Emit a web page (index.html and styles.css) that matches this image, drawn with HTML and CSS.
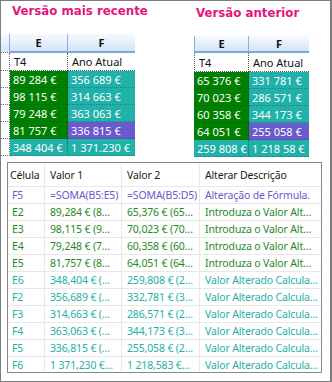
FILE: index.html
```html
<!DOCTYPE html>
<html lang="pt">
<head>
<meta charset="utf-8">
<link rel="stylesheet" href="styles.css">
</head>
<body>
<div class="frame">
  <div class="top">
    <section class="panel panel-new">
      <h2 class="title">Versão mais recente</h2>
      <div class="sheet sheet-new">
        <div class="hd stub"></div><div class="hd col-e">E</div><div class="hd">F</div>
        <div class="stub row-lbl"></div><div class="c lbl col-e">T4</div><div class="c lbl">Ano Atual</div>
        <div class="stub"></div><div class="c green col-e">89 284 €</div><div class="c teal">356 689 €</div>
        <div class="stub"></div><div class="c green col-e">98 115 €</div><div class="c teal">314 663 €</div>
        <div class="stub"></div><div class="c green col-e">79 248 €</div><div class="c teal">363 063 €</div>
        <div class="stub"></div><div class="c green col-e">81 757 €</div><div class="c purple">336 815 €</div>
        <div class="stub"></div><div class="c teal col-e">348 404 €</div><div class="c teal">1 371.230 €</div>
      </div>
    </section>
    <section class="panel panel-old">
      <h2 class="title">Versão anterior</h2>
      <div class="sheet sheet-old">
        <div class="hd col-e first">E</div><div class="hd">F</div>
        <div class="c lbl col-e first">T4</div><div class="c lbl">Ano Atual</div>
        <div class="c green col-e">65 376 €</div><div class="c teal">331 781 €</div>
        <div class="c green col-e">70 023 €</div><div class="c teal">286 571 €</div>
        <div class="c green col-e">60 358 €</div><div class="c teal">344 173 €</div>
        <div class="c green col-e">64 051 €</div><div class="c purple">255 058 €</div>
        <div class="c teal col-e">259 808 €</div><div class="c teal">1 218 58 €</div>
      </div>
    </section>
  </div>
  <div class="changes">
    <div class="grid">
      <div class="h">Célula</div><div class="h">Valor 1</div><div class="h">Valor 2</div><div class="h last">Alterar Descrição</div>

      <div class="r t-purple">F5</div><div class="r t-purple">=SOMA(B5:E5)</div><div class="r t-purple">=SOMA(B5:D5)</div><div class="r t-purple last">Alteração de Fórmula.</div>

      <div class="r t-green">E2</div><div class="r t-green">89,284 € (8…</div><div class="r t-green">65,376 € (65…</div><div class="r t-green last">Introduza o Valor Alt…</div>
      <div class="r t-green">E3</div><div class="r t-green">98,115 € (9…</div><div class="r t-green">70,023 € (70…</div><div class="r t-green last">Introduza o Valor Alt…</div>
      <div class="r t-green">E4</div><div class="r t-green">79,248 € (7…</div><div class="r t-green">60,358 € (60…</div><div class="r t-green last">Introduza o Valor Alt…</div>
      <div class="r t-green">E5</div><div class="r t-green">81,757 € (8…</div><div class="r t-green">64,051 € (64…</div><div class="r t-green last">Introduza o Valor Alt…</div>

      <div class="r t-teal">E6</div><div class="r t-teal">348,404 € (…</div><div class="r t-teal">259,808 € (2…</div><div class="r t-teal last">Valor Alterado Calcula…</div>
      <div class="r t-teal">F2</div><div class="r t-teal">356,689 € (…</div><div class="r t-teal">332,781 € (3…</div><div class="r t-teal last">Valor Alterado Calcula…</div>
      <div class="r t-teal">F3</div><div class="r t-teal">314,663 € (…</div><div class="r t-teal">286,571 € (2…</div><div class="r t-teal last">Valor Alterado Calcula…</div>
      <div class="r t-teal">F4</div><div class="r t-teal">363,063 € (…</div><div class="r t-teal">344,173 € (3…</div><div class="r t-teal last">Valor Alterado Calcula…</div>
      <div class="r t-teal">F5</div><div class="r t-teal">336,815 € (…</div><div class="r t-teal">255,058 € (2…</div><div class="r t-teal last">Valor Alterado Calcula…</div>
      <div class="r t-teal">F6</div><div class="r t-teal">1 371,230 €…</div><div class="r t-teal">1 218,583 €…</div><div class="r t-teal last">Valor Alterado Calcula…</div>
    </div>
  </div>
</div>
</body>
</html>
```
FILE: styles.css
```css
* { box-sizing: border-box; }
html, body { margin: 0; padding: 0; background: #fff; }
body { font-family: "Noto Sans", "Open Sans", sans-serif; }

.frame {
  width: 332px;
  height: 382px;
  border: 1px solid #7d7d7d;
  border-right-width: 2px;
  background: #fff;
  overflow: hidden;
}

.top {
  display: flex;
  height: 161px;
}

.panel { display: flex; flex-direction: column; }
.panel-new { width: 193px; }
.panel-old { width: 136px; }

.title {
  margin: 0;
  font-family: "DejaVu Sans", Verdana, sans-serif;
  font-weight: bold;
  font-size: 11.8px;
  line-height: 16px;
  color: #e4157f;
  white-space: nowrap;
}
.panel-new .title { height: 33px; padding: 2px 0 0 11px; }
.panel-old .title { height: 35px; padding: 4px 0 0 2px; }

.sheet {
  display: grid;
  font-size: 11px;
  color: #fff;
}
.sheet-new {
  grid-template-columns: 9px 58px 67px;
  grid-template-rows: 19px 18px repeat(5, 17px);
}
.sheet-old {
  grid-template-columns: 55px 60px;
  grid-template-rows: 17px 19px repeat(5, 17px);
}

.hd {
  background: linear-gradient(#f6faff, #d5e4f7);
  border-bottom: 2px solid #7ea6dc;
  color: #111;
  font-weight: bold;
  font-size: 11px;
  display: flex;
  align-items: center;
  justify-content: center;
}
.hd.stub, .hd.col-e { border-right: 1px solid #8eb1e0; }
.hd.first { border-left: 1px solid #8eb1e0; }

.stub {
  border-right: 1px dotted #6a6a6a;
  border-bottom: 1px dotted #6a6a6a;
}

.c {
  display: flex;
  align-items: center;
  padding-left: 3px;
  white-space: nowrap;
  overflow: hidden;
  border-bottom: 1px dotted rgba(40, 40, 40, 0.35);
}
.c.col-e { border-right: 1px dotted rgba(40, 40, 40, 0.55); }
.c.lbl {
  color: #111;
  background: #fff;
  padding-left: 4px;
  border-bottom: 1px dotted #555;
}
.c.lbl.col-e { border-right: 1px dotted #555; }
.c.first { border-left: 1px dotted #555; }

.green { background: #008000; }
.teal { background: #20b2aa; }
.purple { background: #6a5acd; }

.changes {
  margin-left: 6px;
  width: 315px;
  height: 211px;
  border: 1px solid #888;
  overflow: hidden;
}
.grid {
  display: grid;
  grid-template-columns: 37px 77px 78px 121px;
  grid-auto-rows: 17px;
  grid-template-rows: 24px;
  font-family: "Noto Sans", "Open Sans", sans-serif;
  font-size: 10.5px;
  letter-spacing: -0.15px;
}
.h, .r {
  border-right: 1px solid #e8e8e8;
  border-bottom: 1px solid #e8e8e8;
  white-space: nowrap;
  overflow: hidden;
  display: flex;
  align-items: center;
}
.h.last, .r.last { border-right: none; }
.h { color: #1a1a1a; padding-left: 5px; }
.h:first-child { padding-left: 2px; }
.r { padding-left: 5px; }
.r:nth-child(4n+1) { padding-left: 4px; }

.t-purple { color: #6a5acd; }
.t-green { color: #1f8a1f; }
.t-teal { color: #24b0a8; }
```
